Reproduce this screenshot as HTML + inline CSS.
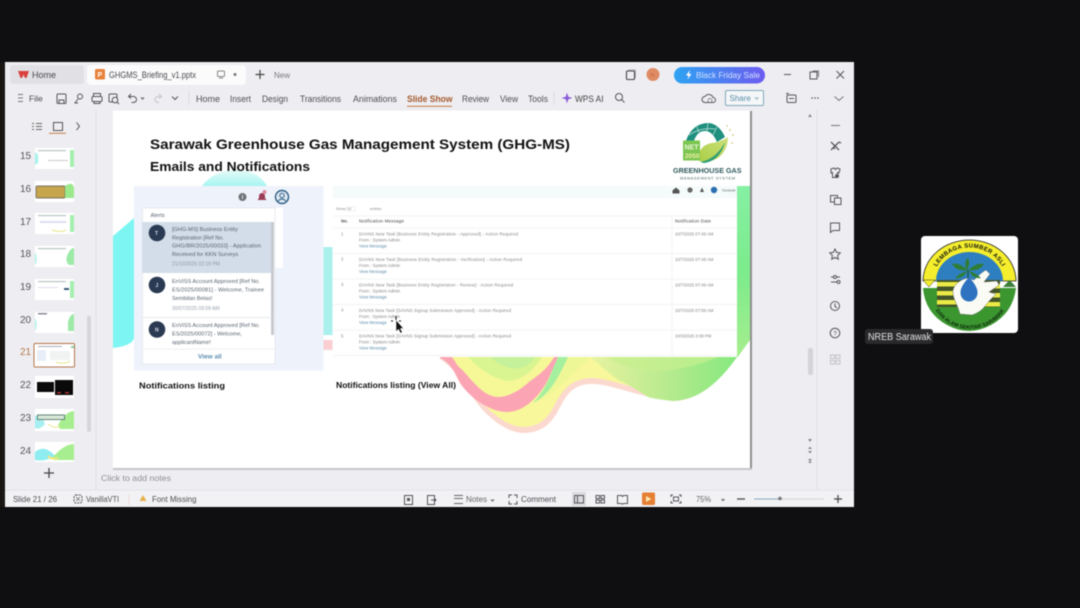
<!DOCTYPE html>
<html><head><meta charset="utf-8"><style>
html,body{margin:0;padding:0;background:#0f0f11;width:1080px;height:608px;overflow:hidden}
svg{display:block;filter:blur(.4px)}
text{font-family:"Liberation Sans",sans-serif}
.t{font-size:9px;fill:#4a4a4e}
.i{fill:none;stroke:#55555a;stroke-width:1}
.n{font-size:10px;fill:#55555a}
.a{font-size:5.6px;fill:#5a6470}
.m{font-size:4.3px;fill:#858585}
.l{stroke:#eef0f0;stroke-width:.7}
</style></head><body>
<svg width="1080" height="608" viewBox="0 0 1080 608" xmlns="http://www.w3.org/2000/svg">
<rect width="1080" height="608" fill="#0f0f11"/>
<rect x="0" y="62" width="5" height="445" fill="#1a1613"/>
<rect x="5" y="62" width="849" height="445" fill="#eeeef2"/>

<!-- tabs -->
<rect x="10" y="65" width="74" height="19" rx="3" fill="#e0e0e5"/>
<rect x="87" y="65" width="159" height="20" rx="4" fill="#fbfbfc"/>
<path d="M18 71h11l-2.500 7-1.700-.3-1.300-3.200-1.300 3.200-1.700.3z" fill="#d9413d"/>
<text x="32" y="78" class="t">Home</text>
<rect x="95" y="69" width="10" height="10.500" rx="1.500" fill="#e8813a"/>
<text x="97.500" y="77" font-size="7" font-weight="700" fill="#fff">P</text>
<text x="109" y="78" class="t" textLength="87" lengthAdjust="spacingAndGlyphs">GHGMS_Briefing_v1.pptx</text>
<rect x="217.500" y="71" width="7" height="5.500" rx="1" fill="none" stroke="#888"/><path d="M219 78h4" fill="none" stroke="#888"/>
<circle cx="235" cy="74.500" r="1.500" fill="#777"/>
<path d="M260 70v9M255.500 74.500h9" stroke="#444" stroke-width="1.200"/>
<text x="274" y="78" font-size="8" fill="#777">New</text>
<rect x="626.500" y="71" width="8" height="8.500" rx="1" fill="none" stroke="#444" stroke-width="1.100"/><path d="M628 69.800h7.500v8" fill="none" stroke="#999" stroke-width=".7"/>
<circle cx="653" cy="74.500" r="6.500" fill="#df8b63"/>
<text x="650.500" y="77" font-size="5.500" fill="#c86a40">N</text>
<defs><linearGradient id="pill" x1="0" x2="1"><stop offset="0" stop-color="#2ea3f2"/><stop offset="1" stop-color="#6d5cf0"/></linearGradient>
<linearGradient id="gr" x1="0" x2="0" y1="0" y2="1"><stop offset="0" stop-color="#86f0a4"/><stop offset=".5" stop-color="#7cec8c"/><stop offset="1" stop-color="#a7ee8e"/></linearGradient>
<linearGradient id="cy" x1="0" x2="0" y1="0" y2="1"><stop offset="0" stop-color="#a8f7f3"/><stop offset="1" stop-color="#78f5f4"/></linearGradient>
<linearGradient id="arch" x1="0" x2="0" y1="0" y2="1"><stop offset="0" stop-color="#e6fbf9"/><stop offset="1" stop-color="#a6f5f1"/></linearGradient>
<linearGradient id="leaf" x1="0" x2="1" y1="1" y2="0"><stop offset="0" stop-color="#a9cf47"/><stop offset="1" stop-color="#cfe07a"/></linearGradient>
<linearGradient id="wg" x1="0" x2="1"><stop offset="0" stop-color="#e9f3a0"/><stop offset=".55" stop-color="#b5ea8e"/><stop offset="1" stop-color="#85e97f"/></linearGradient>
<path id="topArc" d="M932 285 A37.500 37.500 0 0 1 1007 285"/>
<path id="botArc" d="M930 297 A41 41 0 0 0 1010 297"/></defs>
<rect x="674" y="67" width="91" height="16.500" rx="8.200" fill="url(#pill)"/>
<path d="M690 70l-4 5.500h2.500l-1 4 4-5.500h-2.500z" fill="#fff"/>
<text x="696" y="78" font-size="8.200" fill="#d3e2ff" textLength="64" lengthAdjust="spacingAndGlyphs">Black Friday Sale</text>
<path d="M784 74.500h7" stroke="#555" stroke-width="1"/>
<rect x="810" y="72" width="7" height="7" fill="none" stroke="#555"/><path d="M812.500 71h6v6" fill="none" stroke="#555" stroke-width=".8"/>
<path d="M836.500 71l7.500 7.500M844 71l-7.500 7.500" stroke="#555" stroke-width="1"/>

<!-- toolbar -->
<path d="M18 94.500h5M18 98h5M18 101.500h5" stroke="#777" stroke-width="1"/>
<text x="29" y="101.500" font-size="8.500" fill="#4a4a4e">File</text>
<rect x="57" y="94" width="9" height="9.500" rx="1" class="i"/><path d="M59 103v-3h5v3" class="i"/>
<circle cx="80" cy="96.500" r="2.500" class="i"/><path d="M78 99l-3 4h3" class="i"/>
<rect x="92" y="96.500" width="10" height="5" rx="1" class="i"/><path d="M93.500 96v-2.500h7v2.500M94 101v2.500h6v-2.500" class="i"/>
<rect x="109" y="94" width="8" height="8" rx="1" class="i"/><circle cx="115" cy="100" r="2.800" fill="#eeeef2" stroke="#55555a"/><path d="M117 102l2 2" class="i"/>
<path d="M129 96.500h4.500a3 3 0 0 1 0 6h-2M131 94l-2.500 2.500 2.500 2" class="i"/>
<path d="M141 97.500l1.500 1.500 1.500-1.500" class="i"/>
<path d="M161 96.500h-3a3 3 0 0 0 0 6h1M159 94l2.500 2.500-2.500 2" fill="none" stroke="#c5c5ca"/>
<path d="M172 96.500l3 3 3-3" class="i"/>
<path d="M189 91v14" stroke="#dcdce0"/>
<g font-size="9" fill="#4e4e52">
<text x="196" y="102" textLength="24" lengthAdjust="spacingAndGlyphs">Home</text>
<text x="230" y="102" textLength="21" lengthAdjust="spacingAndGlyphs">Insert</text>
<text x="262" y="102" textLength="26" lengthAdjust="spacingAndGlyphs">Design</text>
<text x="300" y="102" textLength="41" lengthAdjust="spacingAndGlyphs">Transitions</text>
<text x="353" y="102" textLength="44" lengthAdjust="spacingAndGlyphs">Animations</text>
<text x="407" y="102" textLength="45.500" lengthAdjust="spacingAndGlyphs" font-weight="700" fill="#a5592e">Slide Show</text>
<text x="462" y="102" textLength="27" lengthAdjust="spacingAndGlyphs">Review</text>
<text x="500" y="102" textLength="18" lengthAdjust="spacingAndGlyphs">View</text>
<text x="528" y="102" textLength="20" lengthAdjust="spacingAndGlyphs">Tools</text>
<text x="575" y="102" textLength="28.500" lengthAdjust="spacingAndGlyphs" fill="#444">WPS AI</text>
</g>
<rect x="407" y="105.800" width="45" height="1" fill="#c27a4b"/>
<path d="M554 92v13" stroke="#dcdce0"/>
<path d="M567 92.500l1.300 4.200 4.200 1.300-4.200 1.300-1.300 4.200-1.300-4.200-4.200-1.300 4.200-1.300z" fill="#8a5ad8"/>
<circle cx="619" cy="97" r="3.500" class="i"/><path d="M621.500 99.500l3 3" class="i"/>
<path d="M705 102.500a3 3 0 0 1 0-6 4.500 4.500 0 0 1 8 1 2.500 2.500 0 0 1 0 5z" class="i"/><circle cx="710" cy="100.500" r="2" fill="#eeeef2" stroke="#666" stroke-width=".7"/>
<rect x="725.500" y="90.500" width="38" height="15" rx="1.500" fill="#f4f6f8" stroke="#7fa9b8"/>
<text x="729.500" y="101" font-size="8" fill="#5a8fa8">Share</text><path d="M755 97.500l1.700 1.500 1.700-1.500" fill="none" stroke="#7fa9b8"/>
<rect x="787" y="95" width="9" height="7.500" rx="1" class="i"/><path d="M789 98.500h5" class="i"/><path d="M786 93.500h3" class="i"/>
<g fill="#555"><circle cx="812" cy="98" r=".8"/><circle cx="815" cy="98" r=".8"/><circle cx="818" cy="98" r=".8"/></g>
<path d="M834.500 96.500l4.500 4 4.500-4" fill="none" stroke="#777"/>

<!-- panel borders -->
<path d="M96 110v380" stroke="#e2e2e6"/>
<path d="M817 110v380" stroke="#e2e2e6"/>
<path d="M96 490h758M5 490h91" stroke="#e4e4e8"/>
<rect x="5" y="491" width="849" height="16" fill="#f2f2f5"/>

<!-- left panel -->
<path d="M32 123.500h2M36 123.500h6M32 126.500h2M36 126.500h6M32 129.500h2M36 129.500h6" stroke="#666"/>
<rect x="53.500" y="122.500" width="9" height="8" fill="none" stroke="#555"/>
<rect x="49" y="132.800" width="17" height="1" fill="#c77b4d"/>
<path d="M76.500 122.500l3 3.800-3 3.800" class="i"/>
<rect x="87" y="316" width="4" height="116" rx="2" fill="#d5d5da"/>
<text x="20" y="159" class="n">15</text><text x="20" y="192" class="n">16</text><text x="20" y="225" class="n">17</text><text x="20" y="257" class="n">18</text><text x="20" y="290" class="n">19</text><text x="20" y="323" class="n">20</text>
<text x="20" y="355" font-size="10" fill="#b5754a">21</text>
<text x="20" y="388" class="n">22</text><text x="20" y="421" class="n">23</text><text x="20" y="454" class="n">24</text>
<!-- thumbs -->
<g>
<rect x="35" y="148" width="39" height="21" fill="#fff"/><path d="M35 153q4-2 3 10l-3 2z" fill="#a9f2ec"/><rect x="70" y="150" width="4" height="17" fill="#a4efb0"/><rect x="38" y="150" width="28" height="1.200" fill="#b8c4c4"/><rect x="48" y="160" width="20" height="1" fill="#ccc"/>
<rect x="35" y="181" width="39" height="21" fill="#fff"/><rect x="36" y="186" width="29" height="12" rx="1" fill="#c7a54d" stroke="#555" stroke-width=".7"/><path d="M65 186q9-6 9 4v8h-9z" fill="#9ce88d"/>
<rect x="35" y="213" width="39" height="21" fill="#fff"/><rect x="70" y="215" width="4" height="17" fill="#a4efb0"/><rect x="38" y="215" width="28" height="1.200" fill="#b8c4c4"/><rect x="40" y="221" width="26" height="2" fill="#dde"/><path d="M52 230q8 3 14 0" stroke="#e6e68c" fill="none"/>
<rect x="35" y="246" width="39" height="21" fill="#fff"/><path d="M67 256q3-8 7-8v17h-5q-4-4-2-9z" fill="#9de9a8"/><path d="M35 252q3 4 1 12h-1z" fill="#b7f3ec"/><rect x="38" y="248" width="28" height="1.200" fill="#b8c4c4"/>
<rect x="35" y="279" width="39" height="21" fill="#fff"/><rect x="70" y="281" width="4" height="17" fill="#a4efb0"/><rect x="38" y="281" width="28" height="1.200" fill="#b8c4c4"/><rect x="64" y="288" width="5" height="2" fill="#3c5a78"/><rect x="38" y="287" width="20" height="1" fill="#dde"/>
<rect x="35" y="312" width="39" height="21" fill="#fff"/><path d="M68 322q2-8 6-8v17h-6z" fill="#9de9a8"/><path d="M35 318q3 4 1 12h-1z" fill="#b7f3ec"/><rect x="38" y="313" width="9" height="1.500" fill="#889"/>
<rect x="34" y="343.500" width="40.500" height="23.500" rx="1" fill="#fff" stroke="#b5754a" stroke-width="1"/><rect x="37" y="350" width="9" height="11" fill="#e8eef8"/><rect x="50" y="351" width="20" height="9" fill="#f1f3f3"/><rect x="38" y="346" width="24" height="1" fill="#aab"/><rect x="71" y="346" width="3" height="2" fill="#8bcf9f"/><path d="M56 362q8 3 14-1" stroke="#e5e88c" fill="none"/>
<rect x="35" y="376" width="39" height="22" fill="#fff"/><rect x="37" y="382" width="17" height="10" fill="#0a0a0a"/><rect x="55" y="380" width="18" height="15" fill="#0a0a0a"/><rect x="57" y="392" width="4" height="1.500" fill="#a33"/><rect x="65" y="392" width="4" height="1.500" fill="#a33"/>
<rect x="35" y="409" width="39" height="22" fill="#fff"/><path d="M35 416q6-3 10 8q-5 6-10 4z" fill="#a6eef0"/><path d="M58 425q8-14 16-14v18h-14z" fill="#a7ee90"/><rect x="37.500" y="415" width="27" height="4.500" fill="#d8e8d8" stroke="#55786a" stroke-width=".9"/><path d="M48 424q8 6 12 1" stroke="#eee88c" fill="none"/>
<rect x="35" y="442" width="39" height="20" fill="#fff"/><path d="M35 452q10-8 20 4q-10 6-20 4z" fill="#8fecf0"/><path d="M52 458q12-14 22-14v16h-20z" fill="#a7ee90"/><path d="M48 456q4 4 10 2" stroke="#f0e87c" stroke-width="2" fill="none"/>
</g>
<path d="M49 468v10M44 473h10" stroke="#444" stroke-width="1.300"/>

<!-- notes -->
<text x="101" y="481" font-size="8.500" fill="#8f8f93" textLength="70" lengthAdjust="spacingAndGlyphs">Click to add notes</text>

<!-- slide -->
<rect x="750" y="111" width="2" height="359" fill="#8f8f8f"/>
<rect x="113" y="468" width="639" height="2" fill="#c6c6c6"/>
<rect x="113" y="110.500" width="637" height="357.500" fill="#fff"/>
<!-- bg shapes -->
<path d="M113 236L134 218V338q-2 8-21 10z" fill="#7df6f3"/>
<path d="M202 186q10-14 31-16 24-1 34 16z" fill="url(#arch)"/>
<rect x="323.500" y="247" width="9" height="88" fill="#aaf0ec"/>
<rect x="323.500" y="340" width="9" height="10" fill="#f9cfd2"/>
<path d="M737 186h13v154l-13 18z" fill="url(#gr)"/>
<!-- wave: pale outer rim -->
<path d="M440 357v2C460 372 468 392 477 403C488 418 508 433 523 433C540 433 550 425 557 413C565 398 570 385 590 384C610 383 640 398 673 401C700 401 722 378 737 357z" fill="#fbd9cf"/>
<!-- yellow body -->
<path d="M445 357C462 372 472 392 482 402C494 416 510 427 523 427C538 427 546 420 553 408C561 392 570 379 590 378C612 378 640 392 673 395C698 395 718 376 732 357z" fill="#f8f79b"/>
<!-- upper right green -->
<path d="M590 357H737C722 378 702 400 673 401C664 400 655 399 648 397C640 392 630 385 618 380C608 372 598 364 590 357z" fill="url(#wg)"/>
<path d="M606 357q36 20 70 12q24-4 42-12z" fill="#c6f08e" opacity=".7"/>
<!-- green sliver -->
<path d="M556 357H568C560 375 550 395 533 403C545 390 552 375 556 357z" fill="#a5f09f"/>
<path d="M568 357H590C582 366 574 372 566 380C558 388 548 397 540 400C552 390 562 375 568 357z" fill="#eef795"/>
<!-- pink -->
<path d="M440 358C450 362 455 373 460 383C470 398 490 412 507 412C525 412 540 395 548 380L558 357H554C548 367 542 373 530 381C520 390 510 397 497 397C480 395 472 378 458 366L452 357H440z" fill="#fba5b4"/>
<!-- yellow/green above pink -->
<path d="M452 357C466 372 476 392 497 396C510 396 520 389 530 381C542 373 548 367 554 357z" fill="#f6f797"/>
<path d="M468 357C480 370 495 380 510 381C525 379 535 368 542 357z" fill="#d9f591"/>
<path d="M490 357C500 366 512 370 520 368C528 366 532 362 535 357z" fill="#c4f19a"/>

<!-- title -->
<text x="150" y="149" font-size="14" font-weight="700" fill="#111" textLength="420" lengthAdjust="spacingAndGlyphs">Sarawak Greenhouse Gas Management System (GHG-MS)</text>
<text x="150" y="171" font-size="12.500" font-weight="700" fill="#111" textLength="160" lengthAdjust="spacingAndGlyphs">Emails and Notifications</text>

<!-- logo -->
<path d="M686 141C690 128 700 123 708 123C716 123 722 130 725 137L717 142C714 135 710 131 705 131C698 131 695 137 693 144z" fill="#1f8f7e"/>
<path d="M689 135q12-8 26-6M697 127l3 8M708 123l-1 8M717 127l-4 8" stroke="#c7e6de" stroke-width=".7" fill="none"/>
<path d="M699 161C697 148 706 144 712 143C718 142 724 140 728 137C728 148 722 156 716 159C710 162 704 162 699 161z" fill="url(#leaf)"/>
<path d="M700 162C712 160 720 152 725 142C722 154 714 162 704 163z" fill="#2f9c74"/>
<rect x="683" y="140.500" width="17" height="20" fill="#7cc652"/>
<text x="684.500" y="149.500" font-size="7" font-weight="700" fill="#eaf7d8">NET</text>
<text x="685" y="158" font-size="6.500" font-weight="700" fill="#f2efa6">2050</text>
<g fill="#c9b560"><circle cx="730" cy="130" r=".8"/><circle cx="733" cy="135" r=".8"/><circle cx="732" cy="143" r=".8"/><circle cx="727" cy="126" r=".7"/></g>
<text x="673" y="173" font-size="7.400" font-weight="700" fill="#2f5a5c" textLength="68.500" lengthAdjust="spacingAndGlyphs">GREENHOUSE GAS</text>
<text x="680" y="179.500" font-size="3.900" fill="#41605f" textLength="55" lengthAdjust="spacing">MANAGEMENT SYSTEM</text>

<!-- left screenshot -->
<rect x="134" y="186" width="189.500" height="184.500" fill="#eef3fb"/>
<rect x="275" y="208" width="8" height="60" fill="#fff"/>
<circle cx="242.500" cy="197" r="4" fill="#6d7378"/><rect x="242" y="195" width="1" height="4" fill="#ddd"/>
<path d="M262 193a3 3 0 0 1 3 3v2l1.500 2h-9l1.500-2v-2a3 3 0 0 1 3-3z" fill="#9a3c58"/><circle cx="264.500" cy="192" r="2" fill="#e08aa0"/>
<circle cx="282" cy="197" r="6.500" fill="#dfe9f3" stroke="#2f5f85" stroke-width="1.400"/><circle cx="282" cy="195.500" r="2.200" fill="none" stroke="#2f5f85"/><path d="M278 201q4-4 8 0" fill="none" stroke="#2f5f85"/>
<rect x="142.500" y="208" width="132.500" height="156" fill="#fff" stroke="#dcdfe4" stroke-width=".6"/>
<text x="150.500" y="217" class="a">Alerts</text>
<rect x="142" y="222" width="131" height="51" fill="#d2dde9"/>
<rect x="271" y="222" width="3" height="113" fill="#c6cad0"/>
<path d="M142 317.500h131" stroke="#dfe3e8" stroke-width=".7"/>
<circle cx="157" cy="233" r="8.300" fill="#2a3a52"/><circle cx="157" cy="285" r="8.300" fill="#2a3a52"/><circle cx="157" cy="329.500" r="8.300" fill="#2a3a52"/>
<text x="155" y="235" font-size="5" font-weight="700" fill="#dde">T</text><text x="155.500" y="287" font-size="5" font-weight="700" fill="#dde">J</text><text x="155" y="331.500" font-size="5" font-weight="700" fill="#dde">N</text>
<text x="172" y="231" class="a">[GHG-MS] Business Entity</text>
<text x="172" y="239.500" class="a">Registration [Ref No.</text>
<text x="172" y="247.500" class="a" textLength="89" lengthAdjust="spacing">GHG/BR/2025/00033] - Application</text>
<text x="172" y="256" class="a">Received for KKN Surveys</text>
<text x="172" y="265.500" font-size="5" fill="#8d9aa6">21/10/2025 02:19 PM</text>
<text x="172" y="283" class="a">EnViSS Account Approved [Ref No.</text>
<text x="172" y="291.500" class="a" textLength="92" lengthAdjust="spacing">ES/2025/00081] - Welcome, Trainee</text>
<text x="172" y="300" class="a">Sembilan Belas!</text>
<text x="172" y="310" font-size="5" fill="#9aa3ad">30/07/2025 09:09 AM</text>
<text x="172" y="327" class="a">EnViSS Account Approved [Ref No.</text>
<text x="172" y="335.500" class="a">ES/2025/00072] - Welcome,</text>
<text x="172" y="344" class="a">applicantName!</text>
<path d="M142 349h133" stroke="#e9ecef" stroke-width=".7"/>
<text x="198" y="358.500" font-size="6.500" font-weight="700" fill="#5f8fb0">View all</text>
<text x="139" y="388.500" font-size="8.500" font-weight="700" fill="#111" textLength="86" lengthAdjust="spacingAndGlyphs">Notifications listing</text>

<!-- right screenshot -->
<rect x="333" y="186" width="404" height="12" fill="#f4fbfa"/>
<rect x="333" y="198" width="404" height="159" fill="#fff"/>
<path d="M672.500 190.500l3.500-3 3.500 3v3h-7z" fill="#555"/><circle cx="690" cy="190" r="2.600" fill="#666"/><path d="M702 187.500l2 4.500h-4z" fill="#555"/><circle cx="714" cy="190" r="3.200" fill="#2a6fb0"/><text x="722" y="191.500" font-size="3.500" fill="#777">Sarawak</text>
<text x="336" y="210" font-size="3.800" fill="#888">Show</text><rect x="346" y="207" width="9" height="4" fill="none" stroke="#e5e5e5" stroke-width=".5"/><text x="347" y="210" font-size="3.800" fill="#888">10</text><text x="370" y="210" font-size="3.800" fill="#888">entries</text>
<path d="M333 216h404M333 228h404M333 253.500h404M333 279h404M333 304.500h404M333 330h404M333 355.500h404" class="l"/>
<path d="M672 216v140" class="l"/>
<text x="341" y="222.500" font-size="4.300" font-weight="700" fill="#555">No.</text>
<text x="359" y="222.500" font-size="4.500" fill="#444" textLength="45" lengthAdjust="spacing">Notification Message</text>
<text x="675" y="222.500" font-size="4.500" fill="#444" textLength="36" lengthAdjust="spacing">Notification Date</text>
<text x="341" y="235.500" class="m">1</text><text x="341" y="260.500" class="m">2</text><text x="341" y="286" class="m">3</text><text x="341" y="311.500" class="m">4</text><text x="341" y="337.500" class="m">5</text>
<text x="359" y="235.500" class="m" textLength="159" lengthAdjust="spacing">DAVNS New Task [Business Entity Registration - Approved] - Action Required</text>
<text x="359" y="241.500" class="m">From : System Admin</text><text x="359" y="247.500" class="m" style="fill:#5f8fb0">View Message</text>
<text x="359" y="261" class="m" textLength="163" lengthAdjust="spacing">DAVNS New Task [Business Entity Registration - Verification] - Action Required</text>
<text x="359" y="267" class="m">From : System Admin</text><text x="359" y="273" class="m" style="fill:#5f8fb0">View Message</text>
<text x="359" y="286.500" class="m" textLength="154" lengthAdjust="spacing">DAVNS New Task [Business Entity Registration - Review] - Action Required</text>
<text x="359" y="292.500" class="m">From : System Admin</text><text x="359" y="298.500" class="m" style="fill:#5f8fb0">View Message</text>
<text x="359" y="312" class="m" textLength="152" lengthAdjust="spacing">DAVNS New Task [DAVNS Signup Submission Approved] - Action Required</text>
<text x="359" y="318" class="m">From : System Admin</text><text x="359" y="324" class="m" style="fill:#5f8fb0">View Message</text>
<text x="359" y="337.500" class="m" textLength="152" lengthAdjust="spacing">DAVNS New Task [DAVNS Signup Submission Approved] - Action Required</text>
<text x="359" y="343.500" class="m">From : System Admin</text><text x="359" y="349.500" class="m" style="fill:#5f8fb0">View Message</text>
<text x="675" y="235.500" class="m">10/7/2025 07:49 AM</text><text x="675" y="261" class="m">10/7/2025 07:49 AM</text><text x="675" y="286.500" class="m">10/7/2025 07:49 AM</text><text x="675" y="312" class="m">10/7/2025 07:59 AM</text><text x="675" y="337.500" class="m">10/3/2025 3:08 PM</text>
<text x="336" y="388" font-size="8.500" font-weight="700" fill="#111" textLength="120" lengthAdjust="spacingAndGlyphs">Notifications listing (View All)</text>
<!-- cursor -->
<path d="M396 320v11.500l2.500-2.300 2 4 1.800-.9-2-3.800h3.200z" fill="#111" stroke="#fff" stroke-width=".5"/>
<path d="M396 316v4M393 321h-2M399 321h2" stroke="#111" stroke-width="1"/>

<!-- right panel -->
<g fill="#8a8a8e"><path d="M808 117l2-3 2 3z"/><path d="M808 439l2 3 2-3z"/><path d="M808 449l2-2.500 2 2.500zM808 451l2 2.500 2-2.500z"/><path d="M808 459l2 2.500 2-2.500zM808 461.500l2 2 2-2z"/></g>
<rect x="808" y="348" width="5" height="27" rx="2" fill="#d4d4d8"/>
<path d="M831 125.500h9" stroke="#777"/>
<path d="M831 142l8 8M839 142l-8 8M833 147l2 2M841 143l-2-1" fill="none" stroke="#444" stroke-width="1.200"/>
<path d="M831 169l3-1 1.500 1.500 1.500-1.500 3 1-1 4-1.500-.5v5h-5v-5l-1.500.5z" class="i"/><circle cx="837" cy="176" r="2" fill="#555"/>
<rect x="830.500" y="195.500" width="7" height="6.500" class="i"/><rect x="834.500" y="198" width="6.500" height="6.500" fill="#eeeef2" stroke="#555"/>
<path d="M830.500 223h9v7.500h-6.500l-2.500 2z" class="i"/>
<path d="M835 249l1.600 3.400 3.700.5-2.700 2.600.7 3.700-3.300-1.800-3.300 1.800.7-3.700-2.700-2.600 3.700-.5z" class="i"/>
<path d="M831 277h3M837 277h3M831 282h6" class="i"/><circle cx="835" cy="277" r="1.500" class="i"/><circle cx="838.500" cy="282" r="1.500" class="i"/>
<circle cx="835" cy="306" r="4.500" class="i"/><path d="M835 303.500v3l2 1.500" class="i"/>
<circle cx="835" cy="333" r="4.800" class="i"/><text x="833.200" y="335.500" font-size="6.500" fill="#555">?</text>
<g fill="none" stroke="#c4c4c8"><rect x="830.500" y="355" width="4" height="3.500"/><rect x="836" y="355" width="4" height="3.500"/><rect x="830.500" y="360.500" width="4" height="3.500"/><rect x="836" y="360.500" width="4" height="3.500"/></g>

<!-- status bar -->
<g font-size="8" fill="#4f4f53">
<text x="13" y="502" textLength="44" lengthAdjust="spacingAndGlyphs">Slide 21 / 26</text>
<text x="86" y="502" textLength="33" lengthAdjust="spacingAndGlyphs">VanillaVTI</text>
<text x="152" y="502" textLength="44.500" lengthAdjust="spacingAndGlyphs">Font Missing</text>
<text x="466" y="502" textLength="21" lengthAdjust="spacingAndGlyphs" fill="#666">Notes</text>
<text x="521" y="502" textLength="35" lengthAdjust="spacingAndGlyphs">Comment</text>
<text x="696" y="502" textLength="15" lengthAdjust="spacingAndGlyphs" fill="#666">75%</text>
</g>
<rect x="74" y="495" width="8" height="8" rx="2" class="i" stroke-dasharray="2 1"/><path d="M76 497l4 4M80 497l-4 4" stroke="#666" stroke-width=".7"/>
<path d="M129 494v11" stroke="#f0d8d8"/>
<path d="M143 495l3.500 6h-7z" fill="#e8b04c"/>
<rect x="404.500" y="495.500" width="8" height="9" fill="none" stroke="#555"/><rect x="407" y="498" width="3" height="3" fill="#555"/>
<rect x="427.500" y="495.500" width="7" height="9" class="i"/><path d="M431 500h5M434 498l2 2-2 2" class="i"/>
<path d="M454 495.500h9M454 498.500h9M454 503.500h9" stroke="#666" stroke-width=".9"/>
<path d="M491 499.500l1.500 1.500 1.500-1.500" class="i"/>
<path d="M509 498v-3h3M514 495h3v3M517 501v3h-3M512 504h-3v-3" fill="none" stroke="#555"/>
<rect x="572" y="492" width="14" height="14" fill="#dcdce0"/><rect x="574.500" y="495.500" width="9" height="7.500" class="i"/><path d="M577.500 495.500v7.500" class="i"/>
<g class="i"><rect x="596" y="495.500" width="3.500" height="3"/><rect x="601" y="495.500" width="3.500" height="3"/><rect x="596" y="500" width="3.500" height="3"/><rect x="601" y="500" width="3.500" height="3"/></g>
<path d="M617.500 495.500h4l1 1 1-1h4v8h-4l-1 .7-1-.7h-4z" class="i"/>
<rect x="642" y="492.500" width="13" height="12.500" rx="1.500" fill="#e57f34"/><path d="M646 496l5.500 3-5.500 3z" fill="#fbe7b0"/>
<path d="M671 497v-2h2M679 495h2v2M681 501v2h-2M673 503h-2v-2" class="i"/><rect x="673.500" y="497" width="5" height="4" class="i"/>
<path d="M721.500 499l1.500 1.500 1.500-1.500" class="i"/>
<path d="M737 499h8" stroke="#555" stroke-width="1.400"/>
<path d="M754 499h26" stroke="#8aa6bc" stroke-width="1"/><path d="M780 499h44" stroke="#d3d3d7" stroke-width="1"/><circle cx="780" cy="498.500" r="1.800" fill="#777"/>
<path d="M838 495v8M834 499h8" stroke="#444" stroke-width="1.200"/>

<!-- NREB logo -->
<rect x="921" y="236" width="97" height="97" rx="4" fill="#fff"/>
<path d="M923 281a46.500 41 0 0 1 93 0z" fill="#f4ee2c" stroke="#222" stroke-width=".8"/>
<path d="M936 281a33.500 29 0 0 1 67 0z" fill="#2e7fc0"/>
<path d="M923 288h93q-3 25-25 37-11 6-22 6-11 0-22-6-22-12-24-37z" fill="#3c9630"/>
<rect x="937" y="280" width="63" height="27" fill="#44552a"/>
<g fill="#ecea45"><rect x="937" y="282" width="26" height="4.500"/><rect x="937" y="291" width="26" height="4.500"/><rect x="937" y="300" width="26" height="4.500"/><rect x="985" y="284" width="15" height="4.500"/><rect x="985" y="293" width="15" height="4.500"/><rect x="985" y="302" width="15" height="4.500"/></g>
<path d="M937 307q4 8 14 12l34 0q10-4 15-12z" fill="#3c9630"/>
<path d="M923 280h12l-6 7z" fill="#f4ee2c" stroke="#333" stroke-width=".5"/>
<path d="M1003 287l6.500-7 6.500 7z" fill="#3c7f3a"/>
<path d="M953 290C955 283 962 279 968 278L974 280C978 276 982 272 986 270L990 274L984 282L997 281L999 285L989 292L996 294L990 300L985 306C982 310 978 313 972 315L960 314C958 305 952 298 953 290z" fill="#fbfbf5" stroke="#555" stroke-width=".4"/>
<path d="M969 277q-9 10-8.500 16a8.500 8.500 0 0 0 17 0q.5-6-8.500-16z" fill="#2e72c0"/>
<path d="M968 258q-5 4-1 12 4-7 1-12zM968 270q-9-8-16-6 5 8 16 6zM968 270q9-8 16-6-5 8-16 6zM967 271q-7 2-12 7 8 1 12-7zM969 271q7 2 12 7-8 1-12-7z" fill="#2e7d35"/>
<path d="M968 270v8" stroke="#174d20"/>
<text font-size="6" font-weight="700" fill="#111" letter-spacing=".35"><textPath href="#topArc" startOffset="50%" text-anchor="middle">LEMBAGA SUMBER ASLI</textPath></text>
<text font-size="5.300" font-weight="700" fill="#0d2a0d"><textPath href="#botArc" startOffset="50%" text-anchor="middle">DAN ALAM SEKITAR SARAWAK</textPath></text>

<rect x="865" y="329" width="68" height="15" rx="3" fill="#2a2a2c"/>
<text x="868" y="340" font-size="10" fill="#e4e4e4" textLength="63" lengthAdjust="spacingAndGlyphs">NREB Sarawak</text>
</svg>
</body></html>
